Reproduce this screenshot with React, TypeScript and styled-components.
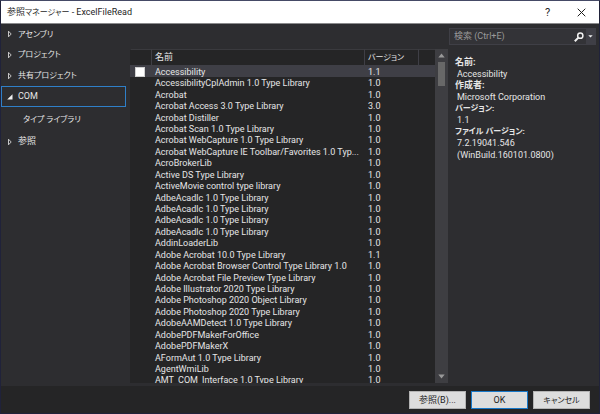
import React from "react";
import styled, { createGlobalStyle } from "styled-components";

const GlobalStyle = createGlobalStyle`
  * { box-sizing: border-box; }
  html, body { margin: 0; }
  body, button, input {
    font-family: Roboto, "Noto Sans CJK JP", sans-serif;
    font-size: 9px;
    line-height: 11px;
    font-feature-settings: "palt";
  }
`;

const Dialog = styled.main`
  display: flex;
  flex-direction: column;
  height: 100vh;
  overflow: hidden;
  background: #2d2d30;
  color: #e6e6e6;
  border: 1px solid #20223a;
  border-top-color: #454a66;
`;

const TitleBar = styled.header`
  display: flex;
  align-items: center;
  flex: none;
  height: 23px;
  padding: 0 13px 0 6px;
  background: #ffffff;
  border-bottom: 1px solid #8a8a8c;
  color: #1e1e1e;
`;

const Title = styled.h1`
  flex: 1;
  margin: 0;
  font-size: 9px;
  font-weight: 400;
`;

const Kana = styled.span`
  font-size: 8px;
`;

const CaptionButton = styled.button`
  display: flex;
  align-items: center;
  justify-content: center;
  width: 9px;
  height: 16px;
  margin-left: 25px;
  padding: 0;
  border: 0;
  background: none;
  color: #1e1e1e;
  font-size: 11px;
`;

const Content = styled.div`
  display: flex;
  flex: 1;
  min-height: 0;
`;

const Sidebar = styled.nav`
  display: grid;
  grid-template-rows: 20px 21px 21px 21px 24px 21px;
  flex: none;
  width: 129px;
  padding-right: 4px;
`;

const NavItem = styled.button<{ $active?: boolean; $child?: boolean }>`
  display: flex;
  align-items: center;
  gap: 5px;
  padding: 0 0 0 ${(p) => (p.$child ? 21 : 4)}px;
  border: 1px solid ${(p) => (p.$active ? "#2f7fc8" : "transparent")};
  background: none;
  color: #e6e6e6;
  text-align: left;
`;

const ListPanel = styled.section`
  display: flex;
  flex: 1;
  min-width: 0;
  margin: 25px 0 3px;
  background: #252526;
`;

const ListView = styled.div`
  flex: 1;
  min-width: 0;
  overflow: hidden;
`;

const Table = styled.table`
  width: 100%;
  table-layout: fixed;
  border-collapse: separate;
  border-spacing: 0;
`;

const HeadCell = styled.th<{ $width?: number }>`
  width: ${(p) => (p.$width ? `${p.$width}px` : "auto")};
  height: 16px;
  padding: 0 0 0 3px;
  border-top: 1px solid #3a3a3e;
  border-left: 1px solid #3f3f46;
  font-weight: 400;
  text-align: left;
  white-space: nowrap;
  &:first-child { border-left-color: transparent; }
`;

const Row = styled.tr<{ $selected?: boolean }>`
  height: 11px;
  background: ${(p) => (p.$selected ? "#3f3f46" : "transparent")};
  &:nth-child(7n + 1), &:nth-child(7n + 3), &:nth-child(7n + 5) { height: 12px; }
`;

const Cell = styled.td`
  padding: 1px 0 0 4px;
  line-height: 10px;
  white-space: nowrap;
  vertical-align: bottom;
`;

const Check = styled.input`
  display: block;
  appearance: none;
  width: 10px;
  height: 10px;
  margin: 0 0 0 1px;
  background: #fefefe;
  border: 1px solid #d0d0d0;
`;

const ScrollBar = styled.div`
  display: flex;
  flex-direction: column;
  align-items: center;
  flex: none;
  width: 13px;
  padding: 4px 0;
  background: #3e3e42;
`;

const ScrollThumb = styled.div`
  width: 7px;
  height: 24px;
  margin: 4px 0 auto;
  background: #686868;
`;

const Details = styled.aside`
  flex: none;
  width: 151px;
  padding: 4px 3px 0 1px;
`;

const SearchBox = styled.form`
  display: flex;
  height: 17px;
  background: #333337;
  border: 1px solid #3f3f46;
`;

const SearchInput = styled.input`
  flex: 1;
  min-width: 0;
  padding: 0 0 0 4px;
  border: 0;
  outline: 0;
  background: none;
  color: #e6e6e6;
  &::placeholder { color: #999999; opacity: 1; }
`;

const SearchButton = styled.button<{ $menu?: boolean }>`
  display: flex;
  align-items: center;
  justify-content: center;
  width: ${(p) => (p.$menu ? 9 : 14)}px;
  padding: 0;
  border: 0;
  background: ${(p) => (p.$menu ? "#3f3f46" : "none")};
`;

const Properties = styled.dl`
  margin: 12px 0 0 6px;
`;

const Term = styled.dt`
  line-height: 11px;
  font-weight: 700;
`;

const Value = styled.dd`
  margin: 0 0 0 2px;
  line-height: 12px;
`;

const Footer = styled.footer`
  display: flex;
  justify-content: flex-end;
  align-items: flex-start;
  gap: 5px;
  flex: none;
  height: 27px;
  padding: 5px 9px 0 0;
  background: #252526;
`;

const Button = styled.button<{ $primary?: boolean }>`
  width: 57px;
  height: 18px;
  padding: 0;
  border: 1px solid ${(p) => (p.$primary ? "#1878c8" : "#b4b4b4")};
  background: #dddddd;
  color: #1e1e1e;
  text-align: center;
`;

const Expander = ({ open }: { open?: boolean }) => (
  <svg width="7" height="8" viewBox="0 0 7 8" aria-hidden="true">
    {open ? (
      <path d="M6.5 1.2V6.5H1.2Z" fill="#f1f1f1" />
    ) : (
      <path d="M2.5 1.2V6.8L5.2 4Z" fill="none" stroke="#d8d8d8" strokeWidth="0.9" />
    )}
  </svg>
);

const Arrow = ({ down }: { down?: boolean }) => (
  <svg width="7" height="5" viewBox="0 0 7 5" aria-hidden="true">
    <path d={down ? "M0.3 0.5H6.7L3.5 4.5Z" : "M0.3 4.5H6.7L3.5 0.5Z"} fill="#999999" />
  </svg>
);

const libraries: [string, string][] = [
  ["Accessibility", "1.1"],
  ["AccessibilityCplAdmin 1.0 Type Library", "1.0"],
  ["Acrobat", "1.0"],
  ["Acrobat Access 3.0 Type Library", "3.0"],
  ["Acrobat Distiller", "1.0"],
  ["Acrobat Scan 1.0 Type Library", "1.0"],
  ["Acrobat WebCapture 1.0 Type Library", "1.0"],
  ["Acrobat WebCapture IE Toolbar/Favorites 1.0 Typ...", "1.0"],
  ["AcroBrokerLib", "1.0"],
  ["Active DS Type Library", "1.0"],
  ["ActiveMovie control type library", "1.0"],
  ["AdbeAcadlc 1.0 Type Library", "1.0"],
  ["AdbeAcadlc 1.0 Type Library", "1.0"],
  ["AdbeAcadlc 1.0 Type Library", "1.0"],
  ["AdbeAcadlc 1.0 Type Library", "1.0"],
  ["AddinLoaderLib", "1.0"],
  ["Adobe Acrobat 10.0 Type Library", "1.1"],
  ["Adobe Acrobat Browser Control Type Library 1.0", "1.0"],
  ["Adobe Acrobat File Preview Type Library", "1.0"],
  ["Adobe Illustrator 2020 Type Library", "1.0"],
  ["Adobe Photoshop 2020 Object Library", "1.0"],
  ["Adobe Photoshop 2020 Type Library", "1.0"],
  ["AdobeAAMDetect 1.0 Type Library", "1.0"],
  ["AdobePDFMakerForOffice", "1.0"],
  ["AdobePDFMakerX", "1.0"],
  ["AFormAut 1.0 Type Library", "1.0"],
  ["AgentWmiLib", "1.0"],
  ["AMT_COM_Interface 1.0 Type Library", "1.0"],
];

export default function App() {
  return (
    <Dialog lang="ja">
      <GlobalStyle />
      <TitleBar>
        <Title>参照<Kana>マネージャー</Kana> - ExcelFileRead</Title>
        <CaptionButton type="button" aria-label="ヘルプ">?</CaptionButton>
        <CaptionButton type="button" aria-label="閉じる">
          <svg width="9" height="9" viewBox="0 0 9 9" aria-hidden="true">
            <path d="M0.7 0.7L8.3 8.3M8.3 0.7L0.7 8.3" stroke="#1e1e1e" fill="none" />
          </svg>
        </CaptionButton>
      </TitleBar>
      <Content>
        <Sidebar>
          <NavItem type="button"><Expander /><Kana>アセンブリ</Kana></NavItem>
          <NavItem type="button"><Expander /><Kana>プロジェクト</Kana></NavItem>
          <NavItem type="button"><Expander /><Kana>共有プロジェクト</Kana></NavItem>
          <NavItem type="button" $active><Expander open />COM</NavItem>
          <NavItem type="button" $child><Kana>タイプ ライブラリ</Kana></NavItem>
          <NavItem type="button"><Expander />参照</NavItem>
        </Sidebar>
        <ListPanel>
          <ListView>
            <Table>
              <thead>
                <tr>
                  <HeadCell $width={21} />
                  <HeadCell>名前</HeadCell>
                  <HeadCell $width={54}><Kana>バージョン</Kana></HeadCell>
                  <HeadCell $width={17} />
                </tr>
              </thead>
              <tbody>
                {libraries.map(([name, version], i) => (
                  <Row key={i} $selected={i === 0}>
                    <Cell>{i === 0 && <Check type="checkbox" aria-label={name} />}</Cell>
                    <Cell>{name}</Cell>
                    <Cell>{version}</Cell>
                    <Cell />
                  </Row>
                ))}
              </tbody>
            </Table>
          </ListView>
          <ScrollBar>
            <Arrow />
            <ScrollThumb />
            <Arrow down />
          </ScrollBar>
        </ListPanel>
        <Details>
          <SearchBox>
            <SearchInput type="text" placeholder="検索 (Ctrl+E)" aria-label="検索" />
            <SearchButton type="button" aria-label="検索を実行">
              <svg width="10" height="10" viewBox="0 0 10 10" aria-hidden="true">
                <circle cx="6.3" cy="3.7" r="2.6" fill="none" stroke="#f1f1f1" strokeWidth="1.5" />
                <path d="M4.4 5.6L0.8 9.2" stroke="#f1f1f1" strokeWidth="2" />
              </svg>
            </SearchButton>
            <SearchButton type="button" $menu aria-label="検索オプション">
              <svg width="5" height="3" viewBox="0 0 5 3" aria-hidden="true">
                <path d="M0.3 0.2H4.7L2.5 2.6Z" fill="#f1f1f1" />
              </svg>
            </SearchButton>
          </SearchBox>
          <Properties>
            <Term>名前:</Term>
            <Value>Accessibility</Value>
            <Term>作成者:</Term>
            <Value>Microsoft Corporation</Value>
            <Term><Kana>バージョン:</Kana></Term>
            <Value>1.1</Value>
            <Term><Kana>ファイル バージョン:</Kana></Term>
            <Value>7.2.19041.546<br />(WinBuild.160101.0800)</Value>
          </Properties>
        </Details>
      </Content>
      <Footer>
        <Button type="button">参照(B)...</Button>
        <Button type="button" $primary>OK</Button>
        <Button type="button"><Kana>キャンセル</Kana></Button>
      </Footer>
    </Dialog>
  );
}
